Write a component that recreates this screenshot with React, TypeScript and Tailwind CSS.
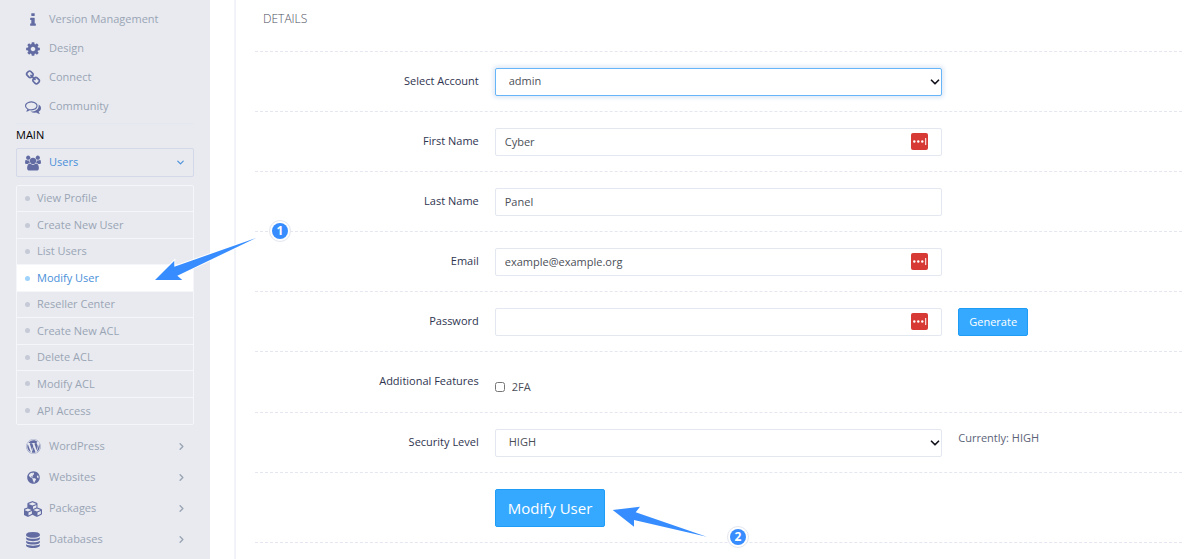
import React from 'react';
import { FaWordpress, FaGlobeAmericas } from 'react-icons/fa';
import { ChevronDown, ChevronRight } from 'lucide-react';

type GlyphProps = { d: string; viewBox?: string; className?: string };

const Glyph = ({ d, viewBox = '0 0 1792 1792', className = 'size-4' }: GlyphProps) => (
  <svg viewBox={viewBox} className={className} fill="currentColor" aria-hidden="true">
    <path d={d} />
  </svg>
);

const paths = {
  info: 'M1216 1344v128q0 26-19 45t-45 19h-512q-26 0-45-19t-19-45v-128q0-26 19-45t45-19h64v-384h-64q-26 0-45-19t-19-45v-128q0-26 19-45t45-19h384q26 0 45 19t19 45v576h64q26 0 45 19t19 45zm-128-1152v192q0 26-19 45t-45 19h-256q-26 0-45-19t-19-45v-192q0-26 19-45t45-19h256q26 0 45 19t19 45z',
  cog: 'M1152 896q0-106-75-181t-181-75-181 75-75 181 75 181 181 75 181-75 75-181zm512-109v222q0 12-8 23t-20 13l-185 28q-19 54-39 91 35 50 107 138 10 12 10 25t-9 23q-27 37-99 108t-94 71q-12 0-26-9l-138-108q-44 23-91 38-16 136-29 186-7 28-36 28h-222q-14 0-24.500-8.500t-11.500-21.500l-28-184q-49-16-90-37l-141 107q-10 9-25 9-14 0-25-11-126-114-165-168-7-10-7-23 0-12 8-23 15-21 51-66.500t54-70.500q-27-50-41-99l-183-27q-13-2-21-12.500t-8-23.500v-222q0-12 8-23t19-13l186-28q14-46 39-92-40-57-107-138-10-12-10-24 0-10 9-23 26-36 98.500-107.500t94.500-71.500q13 0 26 10l138 107q44-23 91-38 16-136 29-186 7-28 36-28h222q14 0 24.500 8.500t11.500 21.500l28 184q49 16 90 37l142-107q9-9 24-9 13 0 25 10 129 119 165 170 7 8 7 22 0 12-8 23-15 21-51 66.500t-54 70.500q26 50 41 98l183 28q13 2 21 12.500t8 23.500z',
  chain: 'M1520 1216q0-40-28-68l-208-208q-28-28-68-28-42 0-72 32 3 3 19 18.500t21.500 21.500 15 19 13 25.500 3.500 27.500q0 40-28 68t-68 28q-15 0-27.500-3.500t-25.500-13-19-15-21.500-21.500-18.500-19q-33 31-33 73 0 40 28 68l206 207q27 27 68 27 40 0 68-26l147-146q28-28 28-67zm-703-705q0-40-28-68l-206-207q-28-28-68-28-39 0-68 27l-147 146q-28 28-28 67 0 40 28 68l208 208q27 27 68 27 42 0 72-31-3-3-19-18.500t-21.500-21.500-15-19-13-25.500-3.500-27.500q0-40 28-68t68-28q15 0 27.500 3.500t25.500 13 19 15 21.500 21.500 18.500 19q33-31 33-73zm895 705q0 120-85 203l-147 146q-83 83-203 83-121 0-204-85l-206-207q-83-83-83-203 0-123 88-209l-88-88q-86 88-208 88-120 0-204-84l-208-208q-84-84-84-204t85-203l147-146q83-83 203-83 121 0 204 85l206 207q83 83 83 203 0 123-88 209l88 88q86-88 208-88 120 0 204 84l208 208q84 84 84 204z',
  comments: 'M704 384q-153 0-286 52t-211.500 141-78.500 191q0 82 53 158t149 132l97 56-35 84q34-20 62-39l44-31 53 10q78 14 153 14 153 0 286-52t211.500-141 78.500-191-78.500-191-211.500-141-286-52zm0-128q191 0 353.500 68.500t256.500 186.500 94 257-94 257-256.500 186.500-353.500 68.500q-86 0-176-16-124 88-278 128-36 9-86 16h-3q-11 0-20.500-8t-11.500-21q-1-3-1-6.500t.5-6.500 2-6l2.500-5 3.500-5.500 4-5 4.500-5 4-4.500q5-6 23-25t26-29.500 22.500-29 25-38.500 20.500-44q-124-72-195-177t-71-224q0-139 94-257t256.500-186.500 353.500-68.500zm822 1169q10 24 20.500 44t25 38.500 22.500 29 26 29.500 23 25q1 1 4 4.500t4.500 5 4 5 3.500 5.500l2.500 5 2 6 .5 6.500-1 6.500q-3 14-13 22t-22 7q-50-7-86-16-154-40-278-128-90 16-176 16-271 0-472-132 58 4 88 4 161 0 309-45t264-129q125-92 192-212t67-254q0-77-23-152 129 71 204 178t75 230q0 120-71 224.500t-195 176.500z',
  users: 'M529 896q-162 5-265 128h-134q-82 0-138-40.500t-56-118.500q0-353 124-353 6 0 43.500 21t97.500 42.500 119 21.500q67 0 133-23-5 37-5 66 0 139 81 256zm1071 637q0 120-73 189.500t-194 69.500h-874q-121 0-194-69.500t-73-189.500q0-53 3.500-103.500t14-109 26.500-108.500 43-97.500 62-81 85.500-53.500 111.500-20q10 0 43 21.500t73 48 107 48 135 21.500 135-21.500 107-48 73-48 43-21.500q61 0 111.500 20t85.500 53.500 62 81 43 97.500 26.500 108.500 14 109 3.500 103.500zm-1024-1277q0 106-75 181t-181 75-181-75-75-181 75-181 181-75 181 75 75 181zm704 384q0 159-112.500 271.500t-271.500 112.500-271.500-112.500-112.500-271.500 112.500-271.500 271.500-112.500 271.500 112.500 112.500 271.500zm576 225q0 78-56 118.500t-138 40.500h-134q-103-123-265-128 81-117 81-256 0-29-5-66 66 23 133 23 59 0 119-21.500t97.500-42.500 43.500-21q124 0 124 353zm-128-609q0 106-75 181t-181 75-181-75-75-181 75-181 181-75 181 75 75 181z',
  cubes: 'M512 1629l384-192v-314l-384 164v342zm-64-454l404-173-404-173-404 173zm1088 454l384-192v-314l-384 164v342zm-64-454l404-173-404-173-404 173zm-448-293l384-165v-266l-384 164v267zm-64-379l441-189-441-189-441 189zm1088 518v416q0 36-19 67t-52 47l-448 224q-25 14-57 14t-57-14l-448-224q-4-2-7-4-2 2-7 4l-448 224q-25 14-57 14t-57-14l-448-224q-33-16-52-47t-19-67v-416q0-38 21.500-70t56.500-48l434-186v-400q0-38 21.500-70t56.500-48l448-192q23-10 50-10t50 10l448 192q35 16 56.500 48t21.500 70v400l434 186q36 16 57 48t21 70z',
  database: 'M896 768q237 0 443-43t325-127v170q0 69-103 128t-280 93.500-385 34.500-385-34.500-280-93.500-103-128v-170q119 84 325 127t443 43zm0 768q237 0 443-43t325-127v170q0 69-103 128t-280 93.500-385 34.500-385-34.500-280-93.500-103-128v-170q119 84 325 127t443 43zm0-384q237 0 443-43t325-127v170q0 69-103 128t-280 93.500-385 34.500-385-34.500-280-93.500-103-128v-170q119 84 325 127t443 43zm0-1152q208 0 385 34.500t280 93.500 103 128v128q0 69-103 128t-280 93.500-385 34.500-385-34.500-280-93.500-103-128v-128q0-69 103-128t280-93.500 385-34.500z',
};

const topLinks = [
  { title: 'Version Management', icon: <Glyph d={paths.info} /> },
  { title: 'Design', icon: <Glyph d={paths.cog} /> },
  { title: 'Connect', icon: <Glyph d={paths.chain} /> },
  { title: 'Community', icon: <Glyph d={paths.comments} /> },
];

const userLinks = [
  'View Profile',
  'Create New User',
  'List Users',
  'Modify User',
  'Reseller Center',
  'Create New ACL',
  'Delete ACL',
  'Modify ACL',
  'API Access',
];

const groups = [
  { title: 'WordPress', icon: <FaWordpress size={15} /> },
  { title: 'Websites', icon: <FaGlobeAmericas size={13} /> },
  { title: 'Packages', icon: <Glyph d={paths.cubes} viewBox="0 0 2048 1792" className="h-4 w-[18px]" /> },
  { title: 'Databases', icon: <Glyph d={paths.database} /> },
];

const Sidebar = () => (
  <nav className="w-[210px] shrink-0 bg-[#e8eaf0] px-4 pt-[5px] text-[#9aa5b4]">
    <ul className="border-b border-[#e3e8f0] pb-0.5">
      {topLinks.map((item) => (
        <li key={item.title}>
          <a href="#" className="flex h-[29px] items-center gap-[7px] pl-2">
            <span className="flex w-[18px] justify-center text-[#626ca3]">{item.icon}</span>
            {item.title}
          </a>
        </li>
      ))}
    </ul>

    <h2 className="pt-0.5 text-[11px] leading-[18px] font-medium text-black">MAIN</h2>

    <a href="#" className="mt-1 flex h-[29px] items-center gap-[7px] rounded-xs border border-[#d3d9e8] pr-[7px] pl-[7px] text-[#4a90d9]">
      <span className="flex w-[18px] justify-center text-[#626ca3]">
        <Glyph d={paths.users} viewBox="-64 0 1920 1792" />
      </span>
      <span className="grow">Users</span>
      <ChevronDown size={11} strokeWidth={2.500} />
    </a>

    <ul className="mt-2 grid h-60 auto-rows-fr divide-y divide-[#f5f6fa] rounded-xs border border-[#f5f6fa]">
      {userLinks.map((title) => {
        const active = title === 'Modify User';
        return (
          <li key={title} className={active ? 'bg-white text-[#4a90d9]' : ''}>
            <a href="#" className="flex h-full items-center gap-[7px] pl-2">
              <span className={active ? 'size-[5px] rounded-full bg-[#9fd3fb]' : 'size-[5px] rounded-full bg-[#c5cad6]'} />
              {title}
            </a>
          </li>
        );
      })}
    </ul>

    <ul className="mt-1.5">
      {groups.map((item) => (
        <li key={item.title}>
          <a href="#" className="flex h-[31px] items-center gap-[7px] pr-[7px] pl-2">
            <span className="flex w-[18px] justify-center text-[#626ca3]">{item.icon}</span>
            <span className="grow">{item.title}</span>
            <ChevronRight size={11} strokeWidth={3} />
          </a>
        </li>
      ))}
    </ul>
  </nav>
);

// Password manager button that sits inside a text field
const FillButton = () => (
  <button type="button" aria-label="Fill" className="absolute top-[5px] right-[14px]">
    <svg width="17" height="17" viewBox="0 0 17 17">
      <rect width="17" height="17" rx="2" fill="#d73a34" />
      <g fill="#fff">
        <circle cx="3.300" cy="8.500" r="1.200" />
        <circle cx="7.300" cy="8.500" r="1.200" />
        <circle cx="11.300" cy="8.500" r="1.200" />
        <rect x="14.200" y="5" width="1" height="7" />
      </g>
    </svg>
  </button>
);

type RowProps = { label?: string; id?: string; children: React.ReactNode; aside?: React.ReactNode };

const Row = ({ label, id, children, aside }: RowProps) => (
  <div className="grid grid-cols-4 border-b border-dashed border-[#e4e7f0] pt-4 pb-[15px]">
    <div className="px-2 pt-1 text-right leading-[18px] font-medium text-[#2f3550]">
      {label && <label htmlFor={id}>{label}</label>}
    </div>
    <div className="col-span-2 px-2">{children}</div>
    <div className="px-2">{aside}</div>
  </div>
);

type FieldProps = { id: string; type?: string; value?: string; fill?: boolean };

const Field = ({ id, type = 'text', value = '', fill }: FieldProps) => (
  <div className="relative">
    <input
      id={id}
      type={type}
      defaultValue={value}
      className="block h-7 w-full rounded-xs border border-[#e3e7f0] bg-white px-[9px] pb-0.5 text-[#4b4f57] outline-none"
    />
    {fill && <FillButton />}
  </div>
);

const Select = ({ id, option, focused }: { id: string; option: string; focused?: boolean }) => (
  <div className="relative">
    <select
      id={id}
      className={`block h-7 w-full appearance-none rounded-xs border bg-white px-[13px] pb-0.5 text-[#4b4f57] outline-none ${
        focused ? 'border-[#66b5f8] shadow-[0_0_4px_2px_#dfe9f5]' : 'border-[#e3e7f0]'
      }`}
    >
      <option>{option}</option>
    </select>
    <ChevronDown size={14} strokeWidth={3} className="pointer-events-none absolute top-[7px] right-0 text-[#15151f]" />
  </div>
);

const Form = () => (
  <form onSubmit={(e) => e.preventDefault()}>
    <Row label="Select Account" id="account">
      <Select id="account" option="admin" focused />
    </Row>
    <Row label="First Name" id="first">
      <Field id="first" value="Cyber" fill />
    </Row>
    <Row label="Last Name" id="last">
      <Field id="last" value="Panel" />
    </Row>
    <Row label="Email" id="email">
      <Field id="email" type="email" value="example@example.org" fill />
    </Row>
    <Row
      label="Password"
      id="password"
      aside={
        <button type="button" className="h-7 rounded-xs border border-[#1f9cf5] bg-[#35a9ff] px-[10px] text-white">
          Generate
        </button>
      }
    >
      <Field id="password" type="password" fill />
    </Row>
    <Row label="Additional Features" id="twofa">
      <label className="flex items-center gap-[7px] pt-[10px] pb-px leading-[18px] text-[#4b4f57]">
        <input id="twofa" type="checkbox" className="size-[10px]" />
        2FA
      </label>
    </Row>
    <Row label="Security Level" id="level" aside={<p className="leading-[18px] text-[#5c6378]">Currently: HIGH</p>}>
      <Select id="level" option="HIGH" />
    </Row>
    <Row>
      <button type="submit" className="h-[38px] rounded-xs border border-[#1f9cf5] bg-[#35a9ff] px-3 text-[15px] text-white">
        Modify User
      </button>
    </Row>
  </form>
);

type StepProps = { n: number; className: string };

const Step = ({ n, className }: StepProps) => (
  <span
    className={`absolute flex size-[22px] items-center justify-center rounded-full border border-[#e3e6ee] bg-white ${className}`}
  >
    <span className="flex size-4 items-center justify-center rounded-full bg-[#378dff] text-xs font-bold text-white">{n}</span>
  </span>
);

const App = () => {
  return (
    <div className="relative flex min-h-screen bg-white font-['Open_Sans',sans-serif] text-[11px]">
      <Sidebar />
      <main className="ml-6 grow border-l-2 border-[#f2f3f8] pr-[18px] pl-[19px]">
        <h1 className="border-b border-dashed border-[#e4e7f0] pt-[9px] pb-[22px] pl-2 text-xs leading-5 font-light text-[#4d5060]">
          DETAILS
        </h1>
        <Form />
      </main>

      {/* Walkthrough markers */}
      <svg className="absolute top-[235px] left-[152px]" width="108" height="50" viewBox="152 235 108 50">
        <path
          d="M256 238L174.300 266.700L174.300 260.700L155 280L182.300 280L177.300 275.700Z"
          fill="#378dff"
          stroke="#fff"
          strokeWidth="2"
          paintOrder="stroke"
        />
      </svg>
      <Step n={1} className="top-[220px] left-[269px]" />
      <svg className="absolute top-[502px] left-[610px]" width="100" height="38" viewBox="610 502 100 38">
        <path d="M706.700 536.700L635.700 512.300L640 506.700L612.700 510L634 526.700L634 520Z" fill="#378dff" />
      </svg>
      <Step n={2} className="top-[526px] left-[727px]" />
    </div>
  );
};

export default App;
